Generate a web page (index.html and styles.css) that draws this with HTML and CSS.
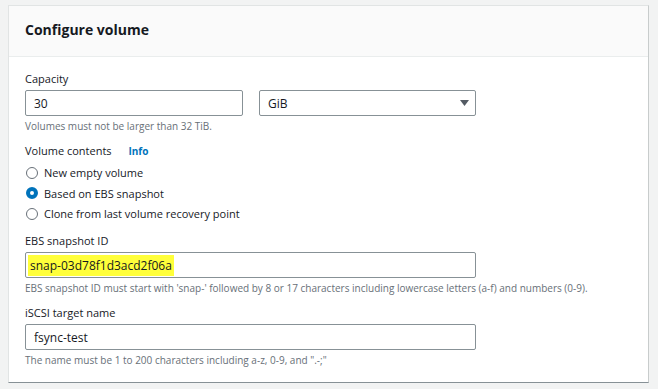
FILE: index.html
```html
<!DOCTYPE html>
<html lang="en">

<head>
    <meta charset="UTF-8">
    <meta name="viewport" content="width=device-width, initial-scale=1.0">
    <title>Configure volume</title>
    <link rel="stylesheet" href="styles.css">
</head>

<body>
    <div class="panel">
        <header class="panel-header">
            <h2>Configure volume</h2>
        </header>
        <div class="panel-body">
            <div class="field">
                <label class="field-label">Capacity</label>
                <div class="row">
                    <input type="text" class="text-input short" value="30">
                    <div class="select-box">
                        <span>GiB</span>
                        <svg width="9" height="6" viewBox="0 0 9 6"><path d="M0 0 H9 L4.5 6 Z" fill="#545b64"/></svg>
                    </div>
                </div>
                <div class="hint">Volumes must not be larger than 32 TiB.</div>
            </div>

            <div class="field">
                <label class="field-label">Volume contents <a href="#" class="info">Info</a></label>
                <div class="radios">
                    <label class="radio"><span class="dot"></span>New empty volume</label>
                    <label class="radio"><span class="dot checked"></span>Based on EBS snapshot</label>
                    <label class="radio"><span class="dot"></span>Clone from last volume recovery point</label>
                </div>
            </div>

            <div class="field">
                <label class="field-label">EBS snapshot ID</label>
                <div class="text-input wide"><mark>snap-03d78f1d3acd2f06a</mark></div>
                <div class="hint">EBS snapshot ID must start with 'snap-' followed by 8 or 17 characters including lowercase letters (a-f) and numbers (0-9).</div>
            </div>

            <div class="field">
                <label class="field-label">iSCSI target name</label>
                <input type="text" class="text-input wide" value="fsync-test">
                <div class="hint">The name must be 1 to 200 characters including a-z, 0-9, and ".-;"</div>
            </div>
        </div>
    </div>
</body>

</html>
```

FILE: styles.css
```css
body {
    margin: 0;
    padding: 5px 9px 0 8px;
    background-color: #f2f3f3;
    font-family: "Open Sans", Arial, sans-serif;
    font-size: 11px;
    color: #16191f;
}

.panel {
    background-color: #fff;
    border: 1px solid #e1e4e4;
    border-right: 1px solid #c8cccc;
    border-bottom: 1px solid #879196;
    height: 378px;
    box-sizing: border-box;
}

.panel-header {
    background-color: #fafafa;
    border-bottom: 1px solid #eaeded;
    height: 51px;
    box-sizing: border-box;
    padding: 0 16px 3px 16px;
    display: flex;
    align-items: center;
}

.panel-header h2 {
    margin: 0;
    font-size: 14px;
    font-weight: 700;
}

.panel-body {
    padding: 13px 16px 0 16px;
}

.field {
    margin-bottom: 9px;
}

.field-label {
    display: block;
    line-height: 18px;
    margin-bottom: 2px;
}

.info {
    color: #0073bb;
    font-weight: 700;
    font-size: 10px;
    text-decoration: none;
    margin-left: 14px;
}

.row {
    display: flex;
    gap: 16px;
}

.text-input {
    box-sizing: border-box;
    height: 26px;
    margin: 0;
    border: 1px solid #879196;
    border-radius: 2px;
    padding: 0 8px;
    font-family: inherit;
    font-size: 12px;
    color: #16191f;
    display: flex;
    align-items: center;
    background: #fff;
}

.text-input.short {
    width: 218px;
}

.text-input.wide {
    width: 451px;
}

.select-box {
    box-sizing: border-box;
    width: 217px;
    height: 26px;
    border: 1px solid #879196;
    border-radius: 2px;
    padding: 0 6px 0 8px;
    display: flex;
    align-items: center;
    justify-content: space-between;
    font-size: 12px;
}

mark {
    background-color: #ffff3a;
    padding: 2px 2px;
    margin-left: -6px;
    color: #16191f;
}

.hint {
    font-size: 10px;
    color: #687078;
    margin-top: 3px;
    line-height: 14px;
}

.radios {
    display: flex;
    flex-direction: column;
    gap: 1.5px;
    margin-top: 3px;
}

.radio {
    display: flex;
    align-items: center;
    gap: 6px;
    line-height: 19px;
    font-size: 11px;
}

.dot {
    box-sizing: border-box;
    width: 12px;
    height: 12px;
    border: 1px solid #687078;
    border-radius: 50%;
    margin-left: 1px;
}

.dot.checked {
    border: 4px solid #0073bb;
}
```
